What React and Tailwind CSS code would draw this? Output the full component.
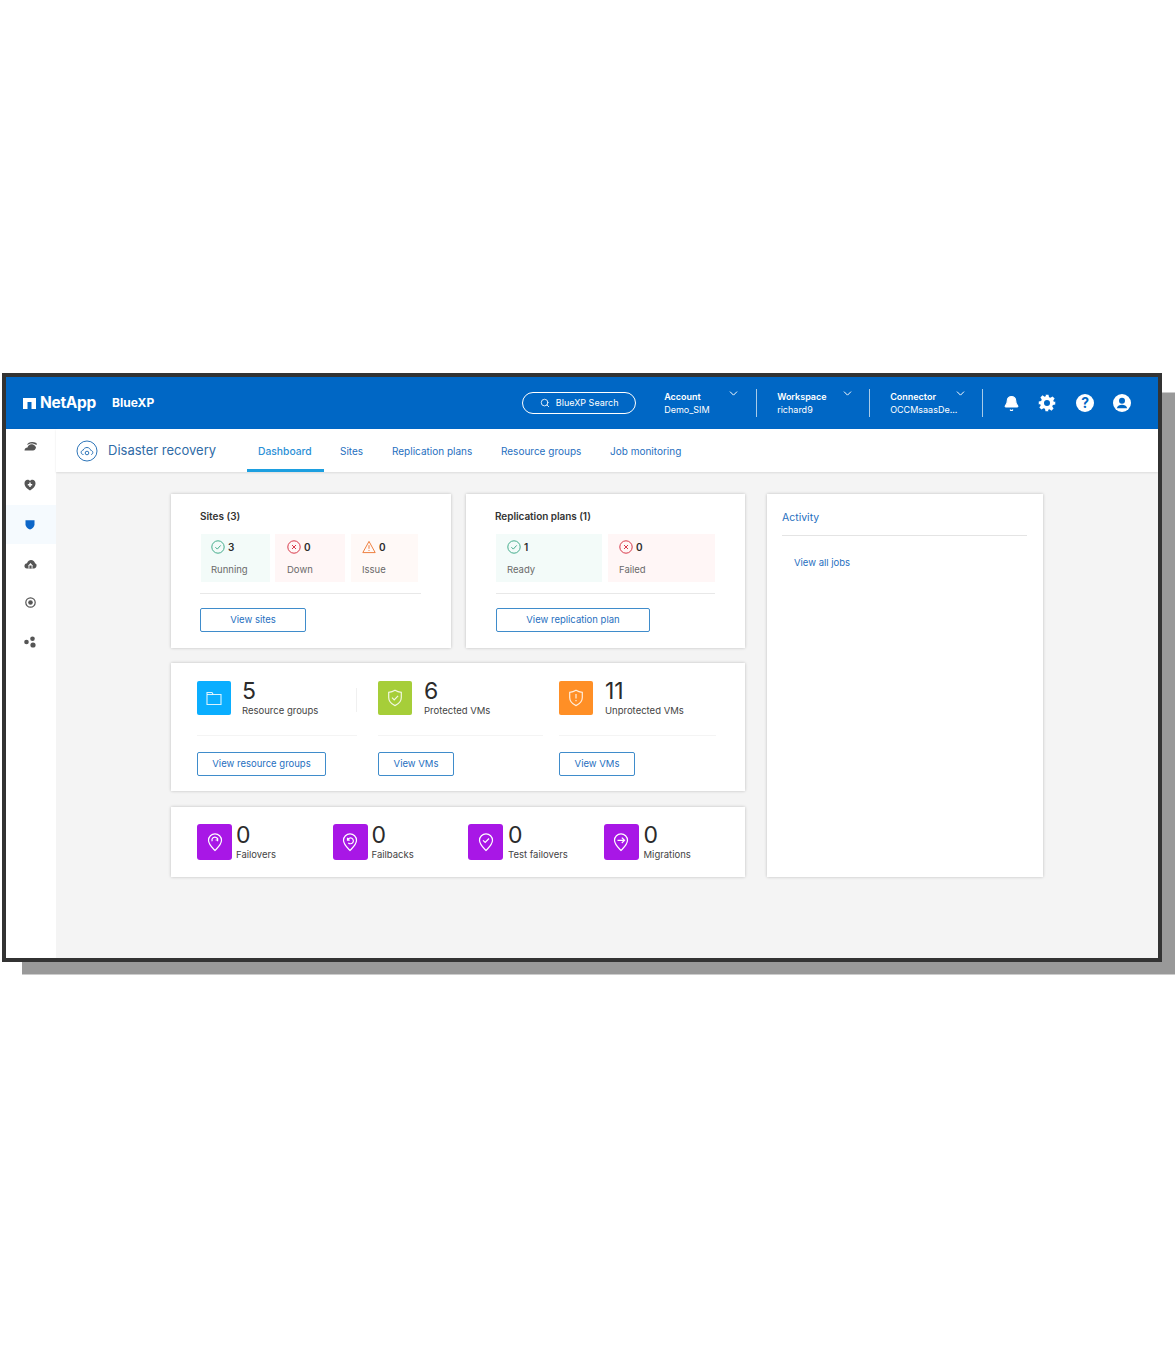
import { Bell, ChevronDown, Search } from "lucide-react";

const fontStack = { fontFamily: "Inter, 'Liberation Sans', sans-serif" };

function ViewButton({ label, width }) {
  return (
    <button
      className={`h-6 ${width} shrink-0 rounded-[2px] border-[1.5px] border-[#3f8ccb] bg-white text-center text-[9.5px] leading-none text-[#1f6fc0]`}
    >
      {label}
    </button>
  );
}

function StatusIcon({ type }) {
  if (type === "ok") {
    return (
      <svg width="14" height="14" viewBox="0 0 14 14" fill="none" stroke="#45ad8c" strokeWidth="1">
        <circle cx="7" cy="7" r="6.200" />
        <path d="M4.4 7.2l1.9 1.9 3.4-3.7" />
      </svg>
    );
  }
  if (type === "down") {
    return (
      <svg width="14" height="14" viewBox="0 0 14 14" fill="none" stroke="#d8394a" strokeWidth="1">
        <circle cx="7" cy="7" r="6.200" />
        <path d="M5 5l4 4M9 5l-4 4" />
      </svg>
    );
  }
  return (
    <svg width="14" height="14" viewBox="0 0 14 14" fill="none" stroke="#ee7f3f" strokeWidth="1">
      <path d="M7 1.4L13.2 12.6H0.8z" strokeLinejoin="round" />
      <path d="M7 5.2v3.6M7 10v1" />
    </svg>
  );
}

function StatusTile({ type, count, label, width, bg, pad }) {
  return (
    <div className={`h-12 ${width} ${bg} ${pad} pt-[6px]`}>
      <div className="flex items-center gap-[3px] text-[10px] leading-none font-semibold text-[#2d2d2d]">
        <StatusIcon type={type} />
        <span>{count}</span>
      </div>
      <div className="mt-[10px] text-[9.5px] leading-3 text-[#6a6a6a]">{label}</div>
    </div>
  );
}

function Card({ className, children }) {
  return <div className={`bg-white shadow-[0_0_3px_rgba(0,0,0,0.22)] ${className}`}>{children}</div>;
}

function ShieldIcon({ mark }) {
  return (
    <svg width="16" height="18" viewBox="0 0 16 18" fill="none" stroke="#ffffff" strokeOpacity="0.85" strokeWidth="1.2">
      <path d="M8 1.2c2 1.3 4 1.9 6.3 2.1v5.2c0 3.6-2.6 6.4-6.3 8.1-3.7-1.7-6.3-4.5-6.3-8.1V3.3C4 3.1 6 2.500 8 1.200z" />
      {mark === "check" ? <path d="M5 8.6l2.2 2.2 3.9-4" /> : <path d="M8 5v4.600M8 11v1.300" />}
    </svg>
  );
}

function FolderIcon() {
  return (
    <svg width="16" height="14" viewBox="0 0 16 14" fill="none" stroke="#ffffff" strokeOpacity="0.85" strokeWidth="1.1">
      <path d="M1 3.500V1.500h5l1.200 2H15v10H1z" />
      <path d="M1 3.500h6.200" />
    </svg>
  );
}

function SummaryItem({ icon, iconBg, count, label, width, button, buttonWidth, divider, rule, textGap }) {
  return (
    <div className={`${width} shrink-0`}>
      <div className="relative flex h-[34px] items-start">
        <div className={`flex h-[34px] w-[34px] items-center justify-center rounded-[2px] ${iconBg}`}>{icon}</div>
        <div className={`${textGap} -mt-[2px]`}>
          <div className="text-[23px] leading-[24px] text-[#2b2b2b]">{count}</div>
          <div className="mt-[2px] text-[9.5px] leading-3 whitespace-nowrap text-[#444444]">{label}</div>
        </div>
        {divider && <div className="absolute top-[7px] left-[159px] h-[24px] w-px bg-[#f0f0f0]" />}
      </div>
      <div className={`mt-[20px] h-px ${rule} bg-[#f4f4f4]`} />
      <div className="mt-[13px]">
        <ViewButton label={button} width={buttonWidth} />
      </div>
    </div>
  );
}

function PinIcon({ kind }) {
  return (
    <svg width="16" height="20" viewBox="0 0 16 20" fill="none" stroke="#ffffff" strokeWidth="1.2">
      <path d="M8 18.500c-2.500-2.600-6.500-6-6.500-10.200a6.500 6.500 0 0 1 13 0c0 4.200-4 7.600-6.500 10.200z" />
      {kind === "failover" && <path d="M5.200 9.200a2.900 2.900 0 1 1 5.300 0M10.600 5.800v2.200H8.600" />}
      {kind === "failback" && <path d="M5.500 5.800v2.300h2.200M5.700 8a2.900 2.900 0 1 1 .6 2.800" />}
      {kind === "test" && <path d="M5 8.300l2.200 2.200 3.800-4" />}
      {kind === "migrate" && <path d="M4.500 8.300h7M8.800 5.600l2.700 2.700-2.700 2.700" />}
    </svg>
  );
}

function ActionItem({ kind, label, width, textGap }) {
  return (
    <div className={`flex ${width} shrink-0 items-start`}>
      <div className="flex h-9 w-[35px] items-center justify-center rounded-[3px] bg-[#a817e6]">
        <PinIcon kind={kind} />
      </div>
      <div className={`${textGap} -mt-px`}>
        <div className="text-[23px] leading-[24px] text-[#2b2b2b]">0</div>
        <div className="mt-[2px] text-[9.5px] leading-3 whitespace-nowrap text-[#444444]">{label}</div>
      </div>
    </div>
  );
}

function HeaderMenu({ title, value, width, chevron }) {
  return (
    <div className={`relative ${width} shrink-0 text-[9px] leading-[13px] text-white`}>
      <div className="font-semibold">{title}</div>
      <div>{value}</div>
      <ChevronDown className={`absolute -top-[3px] ${chevron} h-[13px] w-[13px]`} strokeWidth={1.8} />
    </div>
  );
}

function Separator() {
  return <div className="h-7 w-px shrink-0 bg-[#a8cbe8]" />;
}

function SideIcon({ active, children }) {
  return (
    <div className={`flex h-[39.300px] items-center justify-center pr-[2px] ${active ? "bg-[#f5fafe]" : ""}`}>
      {children}
    </div>
  );
}

export default function App() {
  return (
    <div className="min-h-[1350px] bg-white pt-[373px] pl-[2px]" style={fontStack}>
      <div className="flex h-[589px] w-[1160px] flex-col border-4 border-[#333333] shadow-[16.5px_16px_0_-3.5px_#999999]">
        {/* Top bar */}
        <div className="flex h-[52px] shrink-0 items-center bg-[#0067c5] text-white">
          <div className="ml-[17px] flex items-center">
            <svg width="13" height="11" viewBox="0 0 13 11" fill="#ffffff">
              <path d="M0 0h13v11H8.500V4h-4v7H0z" />
            </svg>
            <span className="ml-[4px] text-[15.5px] leading-none font-bold tracking-[-0.3px]">NetApp</span>
          </div>
          <span className="ml-[16px] text-[12px] leading-none font-bold">BlueXP</span>
          <div className="ml-[368px] flex h-[22px] w-[114px] items-center justify-center rounded-full border border-white text-[9px]">
            <Search className="mr-[6px] h-[10px] w-[10px]" strokeWidth={2} />
            BlueXP Search
          </div>
          <div className="ml-[28px] flex items-center">
            <HeaderMenu title="Account" value="Demo_SIM" width="w-[92px]" chevron="left-[63px]" />
            <Separator />
            <div className="w-[20px]" />
            <HeaderMenu title="Workspace" value="richard9" width="w-[92px]" chevron="left-[64px]" />
            <Separator />
            <div className="w-[20px]" />
            <HeaderMenu title="Connector" value="OCCMsaasDe..." width="w-[92px]" chevron="left-[64px]" />
            <Separator />
          </div>
          <Bell className="ml-[20px] h-[17px] w-[17px]" fill="#ffffff" strokeWidth={1.5} />
          <svg className="ml-[18px]" width="18" height="18" viewBox="0 0 24 24" fill="#ffffff">
            <path
              fillRule="evenodd"
              d="M10 1h4l.7 3.200 1.900.8 2.800-1.800 2.800 2.800-1.800 2.800.8 1.900L23 10v4l-3.200.7-.8 1.900 1.800 2.800-2.800 2.800-2.800-1.800-1.900.8L14 23h-4l-.7-3.200-1.900-.8-2.800 1.800-2.800-2.800 1.800-2.800-.8-1.900L1 14v-4l3.200-.7.8-1.900-1.800-2.800 2.800-2.800 2.800 1.800 1.900-.8zM12 8a4 4 0 1 0 0 8 4 4 0 0 0 0-8z"
            />
          </svg>
          <div className="ml-[20px] flex h-[18px] w-[18px] items-center justify-center rounded-full bg-white text-[14px] leading-none font-bold text-[#0067c5]">
            ?
          </div>
          <svg className="ml-[19px]" width="18" height="18" viewBox="0 0 18 18">
            <circle cx="9" cy="9" r="9" fill="#ffffff" />
            <circle cx="9" cy="6.800" r="3" fill="#0067c5" />
            <path d="M3.800 14.200c.8-2.400 2.800-3.400 5.200-3.400s4.400 1 5.200 3.400z" fill="#0067c5" />
          </svg>
        </div>

        <div className="flex min-h-0 flex-1">
          {/* Left rail */}
          <div className="w-[50px] shrink-0 bg-white shadow-[1px_0_2px_rgba(0,0,0,0.08)]">
            <div className="-mt-[3px]">
              <SideIcon>
                <svg width="13" height="10" viewBox="0 0 13 10" fill="#555555">
                  <path d="M0.500 9.500C.5 7.500 2 6.500 3.500 6.500 4 4 6.500 2.500 9 3.500c1.500.6 2.500 1.500 3 3-.5 2-1.500 3-3 3z" />
                  <path d="M3 4C4 1.500 7.500 0 12.500 2l.3 2C9 1.800 6 2 3 4z" />
                </svg>
              </SideIcon>
              <SideIcon>
                <svg width="12" height="12" viewBox="0 0 12 12">
                  <path d="M6 11.500C3 9.500.5 7.500.5 4.200.5 2 2 .800 3.500.800c1 0 2 .5 2.500 1.300C6.500 1.300 7.500.800 8.500.800 10 .800 11.500 2 11.500 4.200 11.500 7.500 9 9.500 6 11.500z" fill="#555555" />
                  <path d="M6 3.500v4.500M3.800 5.700h4.400" stroke="#ffffff" strokeWidth="1.500" />
                </svg>
              </SideIcon>
              <SideIcon active>
                <svg width="10" height="11" viewBox="0 0 10 11" fill="#0d66c8">
                  <path d="M0.500 1.200h9v4c0 2.500-2 4.300-4.500 5.300C2.500 9.500.5 7.700.5 5.200z" />
                </svg>
              </SideIcon>
              <SideIcon>
                <svg width="13" height="10" viewBox="0 0 13 10">
                  <path d="M3 9.500C1 9.500.2 8 .5 6.500.8 5 2 4.300 3 4.300 3.800 2 5.500 1 7 1c2 0 3.700 1.500 4 3.300 1.300.4 1.800 1.500 1.500 2.800-.3 1.500-1.200 2.400-2.500 2.400z" fill="#555555" />
                  <path d="M6.500 4L4.500 6.200v3.300h4V6.200z" fill="#ffffff" />
                  <rect x="5.400" y="6.500" width="2.200" height="3" fill="#555555" />
                </svg>
              </SideIcon>
              <SideIcon>
                <svg width="11" height="11" viewBox="0 0 11 11" fill="none" stroke="#555555">
                  <circle cx="5.500" cy="5.500" r="4.700" strokeWidth="1.200" />
                  <circle cx="5.500" cy="5.500" r="2.300" fill="#555555" stroke="none" />
                </svg>
              </SideIcon>
              <SideIcon>
                <svg width="12" height="12" viewBox="0 0 12 12" fill="#555555">
                  <circle cx="2.500" cy="6" r="2.300" />
                  <circle cx="8.500" cy="2.800" r="2.300" />
                  <circle cx="9" cy="9" r="2.600" />
                </svg>
              </SideIcon>
            </div>
          </div>

          <div className="flex min-w-0 flex-1 flex-col bg-[#f4f4f4]">
            {/* Tabs */}
            <div className="relative flex h-[43px] shrink-0 items-center bg-white shadow-[0_1px_2px_rgba(0,0,0,0.1)]">
              <svg className="ml-[20px]" width="22" height="22" viewBox="0 0 22 22" fill="none" stroke="#2f76b9">
                <circle cx="11" cy="11" r="10" strokeWidth="1" />
                <path d="M7.500 14.500C5.500 14.500 5 13 5.200 12c.2-1.200 1.200-1.800 2-1.800.5-1.800 2.200-2.700 3.800-2.700 2 0 3.300 1.400 3.700 2.800 1.200.2 2.100 1 2.100 2.200 0 1.200-.8 2-1.800 2" strokeWidth="1" />
                <circle cx="11" cy="13" r="1.800" strokeWidth="1" />
              </svg>
              <span className="ml-[10px] w-[150px] text-[13px] leading-none text-[#2f6ba6]">Disaster recovery</span>
              <div className="flex items-center pt-[2px] text-[10px] text-[#1f6fc0]">
                <div className="w-[82px] text-[10.3px] font-medium text-[#2b8fd6]">Dashboard</div>
                <div className="w-[52px]">Sites</div>
                <div className="w-[109px]">Replication plans</div>
                <div className="w-[109px]">Resource groups</div>
                <div>Job monitoring</div>
              </div>
              <div className="absolute bottom-[0px] left-[191px] h-[3px] w-[77px] bg-[#1c9fe0]" />
            </div>

            {/* Dashboard */}
            <div className="flex gap-[22px] pt-[22px] pl-[115px]">
              <div className="flex w-[574px] flex-col">
                <div className="flex gap-[15px]">
                  <Card className="h-[154px] w-[280px] pt-4 pl-[29px]">
                    <div className="text-[10px] leading-3 font-semibold text-[#333333]">Sites (3)</div>
                    <div className="mt-3 ml-px flex">
                      <StatusTile type="ok" count="3" label="Running" width="w-[69px]" bg="bg-[#f3fbf9]" pad="pl-[10px]" />
                      <div className="w-[5px]" />
                      <StatusTile type="down" count="0" label="Down" width="w-[70px]" bg="bg-[#fff6f6]" pad="pl-[12px]" />
                      <div className="w-[6px]" />
                      <StatusTile type="warn" count="0" label="Issue" width="w-[67px]" bg="bg-[#fff9f7]" pad="pl-[11px]" />
                    </div>
                    <div className="mt-[11px] h-px w-[221px] bg-[#e8e8e8]" />
                    <div className="mt-[11px]">
                      <ViewButton label="View sites" width="w-[106px]" />
                    </div>
                  </Card>
                  <Card className="h-[154px] w-[279px] pt-4 pl-[30px]">
                    <div className="-ml-px text-[10px] leading-3 font-semibold tracking-[-0.05px] text-[#333333]">
                      Replication plans (1)
                    </div>
                    <div className="mt-3 flex gap-[6px]">
                      <StatusTile type="ok" count="1" label="Ready" width="w-[106px]" bg="bg-[#f3fbf9]" pad="pl-[11px]" />
                      <StatusTile type="down" count="0" label="Failed" width="w-[107px]" bg="bg-[#fff6f6]" pad="pl-[11px]" />
                    </div>
                    <div className="mt-[11px] h-px w-[219px] bg-[#e8e8e8]" />
                    <div className="mt-[11px]">
                      <ViewButton label="View replication plan" width="w-[154px]" />
                    </div>
                  </Card>
                </div>

                <Card className="mt-[15px] flex h-[128px] pt-[18px] pl-[26px]">
                  <SummaryItem
                    icon={<FolderIcon />}
                    iconBg="bg-[#0aaeff]"
                    count="5"
                    label="Resource groups"
                    width="w-[181px]"
                    button="View resource groups"
                    buttonWidth="w-[129px]"
                    rule="w-[160px]"
                    textGap="ml-[11px]"
                    divider
                  />
                  <SummaryItem
                    icon={<ShieldIcon mark="check" />}
                    iconBg="bg-[#a6ce39]"
                    count="6"
                    label="Protected VMs"
                    width="w-[181px]"
                    button="View VMs"
                    buttonWidth="w-[76px]"
                    rule="w-[165px]"
                    textGap="ml-3"
                  />
                  <SummaryItem
                    icon={<ShieldIcon mark="alert" />}
                    iconBg="bg-[#ff8f26]"
                    count="11"
                    label="Unprotected VMs"
                    width="w-[160px]"
                    button="View VMs"
                    buttonWidth="w-[76px]"
                    rule="w-[157px]"
                    textGap="ml-3"
                  />
                </Card>

                <Card className="mt-[16px] flex h-[70px] pt-[17px] pl-[26px]">
                  <ActionItem kind="failover" label="Failovers" width="w-[135.5px]" textGap="ml-[4px]" />
                  <ActionItem kind="failback" label="Failbacks" width="w-[135.5px]" textGap="ml-[4px]" />
                  <ActionItem kind="test" label="Test failovers" width="w-[135.5px]" textGap="ml-[5px]" />
                  <ActionItem kind="migrate" label="Migrations" width="w-[135.5px]" textGap="ml-[5px]" />
                </Card>
              </div>

              <Card className="h-[383px] w-[276px] pt-[18px] pl-[15px]">
                <div className="text-[10.5px] leading-3 text-[#1f6fc0]">Activity</div>
                <div className="mt-[11px] h-px w-[245px] bg-[#e4e4e4]" />
                <div className="mt-[21px] ml-3 text-[9.5px] leading-3 text-[#1f6fc0]">View all jobs</div>
              </Card>
            </div>
          </div>
        </div>
      </div>
    </div>
  );
}
